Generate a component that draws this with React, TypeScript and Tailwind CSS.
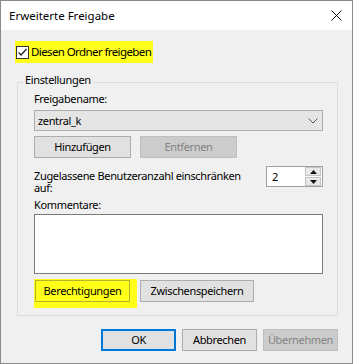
import React from "react";

const font = { fontFamily: '"Noto Sans", "Liberation Sans", sans-serif' };

function Btn({
  children,
  className = "",
  disabled = false,
  focused = false,
}: {
  children: React.ReactNode;
  className?: string;
  disabled?: boolean;
  focused?: boolean;
}) {
  const base = "flex items-center justify-center h-[22px] text-[11px] leading-[16px] whitespace-nowrap ";
  const look = disabled
    ? "bg-[#cccccc] border border-[#bfbfbf] text-[#838383]"
    : focused
    ? "bg-[#e1e1e1] border-2 border-[#0078d7] text-black"
    : "bg-[#e1e1e1] border border-[#adadad] text-black";
  return <div className={base + look + " " + className}>{children}</div>;
}

export default function App() {
  return (
    <div
      className="w-[353px] h-[364px] border border-[#8a8a8a] flex flex-col text-[11px] tracking-[-0.35px] text-black bg-[#f0f0f0]"
      style={font}
    >
      {/* Title bar */}
      <div className="h-[29px] bg-white flex items-center justify-between pl-[8px] pr-[10px]">
        <span className="leading-[16px] text-[11.5px] tracking-normal">Erweiterte Freigabe</span>
        <svg width="11" height="11" viewBox="0 0 11 11">
          <path d="M0.5 0.5 L10.5 10.5 M10.5 0.5 L0.5 10.5" stroke="#111" strokeWidth="1" />
        </svg>
      </div>

      {/* Body */}
      <div className="flex-1 flex flex-col pt-[11px]">
        {/* Checkbox highlight */}
        <div className="ml-[14px] w-[138px] h-[22px] bg-[#ffff1a] flex items-center pl-[1px] whitespace-nowrap">
          <div className="w-[13px] h-[13px] border border-[#333] bg-white flex items-center justify-center">
            <svg width="11" height="11" viewBox="0 0 11 11">
              <path d="M1.5 5.5 L4 8 L9.5 2" stroke="#222" strokeWidth="1.3" fill="none" />
            </svg>
          </div>
          <span className="ml-[2px] leading-[16px] text-[11.5px] tracking-[-0.6px]">Diesen Ordner freigeben</span>
        </div>

        {/* Group box */}
        <div className="relative mt-[19px] ml-[16px] w-[321px] h-[234px] border border-[#dcdcdc] pl-[16px] pr-[14px] flex flex-col">
          <span className="absolute left-[5px] top-[-11px] px-[2px] bg-[#f0f0f0] leading-[16px]">
            Einstellungen
          </span>

          <div className="mt-[8px] h-[16px] leading-[16px]">Freigabename:</div>

          <div className="mt-[3px] h-[21px] border border-[#adadad] bg-[#e5e5e5] flex items-center justify-between pl-[3px] pr-[4px]">
            <span className="leading-[16px]">zentral_k</span>
            <svg width="10" height="6" viewBox="0 0 10 6">
              <path d="M0.5 0.5 L5 5 L9.5 0.5" stroke="#555" strokeWidth="1" fill="none" />
            </svg>
          </div>

          <div className="mt-[5px] flex gap-[9px]">
            <Btn className="w-[97px]">Hinzufügen</Btn>
            <Btn className="w-[97px]" disabled>
              Entfernen
            </Btn>
          </div>

          <div className="mt-[8px] flex justify-between">
            <div className="w-[225px] leading-[12px] pt-[4px]">
              Zugelassene Benutzeranzahl einschränken auf:
            </div>
            <div className="w-[57px] h-[21px] border border-[#a0a0a0] bg-white flex items-center justify-between pl-[5px]">
              <span className="leading-[16px]">2</span>
              <div className="flex flex-col w-[16px] h-[19px] mr-[1px] gap-[1px]">
                <div className="flex-1 bg-[#e8e8e8] border border-[#c4c4c4] flex items-center justify-center">
                  <svg width="7" height="4" viewBox="0 0 7 4">
                    <path d="M0 4 L3.5 0 L7 4 Z" fill="#111" />
                  </svg>
                </div>
                <div className="flex-1 bg-[#e8e8e8] border border-[#c4c4c4] flex items-center justify-center">
                  <svg width="7" height="4" viewBox="0 0 7 4">
                    <path d="M0 0 L3.5 4 L7 0 Z" fill="#111" />
                  </svg>
                </div>
              </div>
            </div>
          </div>

          <div className="mt-[3px] h-[16px] leading-[16px]">Kommentare:</div>

          <div className="mt-[1px] h-[60px] border border-[#7a7a7a] bg-white" />

          <div className="mt-[5px] flex gap-[3px]">
            <div className="w-[103px] h-[29px] bg-[#ffff1a] pt-[1px] pl-[1px]">
              <div className="w-[95px] h-[22px] border border-[#b5b52a] flex items-center justify-center leading-[16px] whitespace-nowrap">
                Berechtigungen
              </div>
            </div>
            <Btn className="w-[114px] mt-[1px]">Zwischenspeichern</Btn>
          </div>
        </div>

        {/* Bottom buttons */}
        <div className="mt-[13px] flex justify-end gap-[6px] pr-[14px]">
          <Btn className="w-[75px]" focused>
            OK
          </Btn>
          <Btn className="w-[75px]">Abbrechen</Btn>
          <Btn className="w-[75px]" disabled>
            Übernehmen
          </Btn>
        </div>
      </div>
    </div>
  );
}
